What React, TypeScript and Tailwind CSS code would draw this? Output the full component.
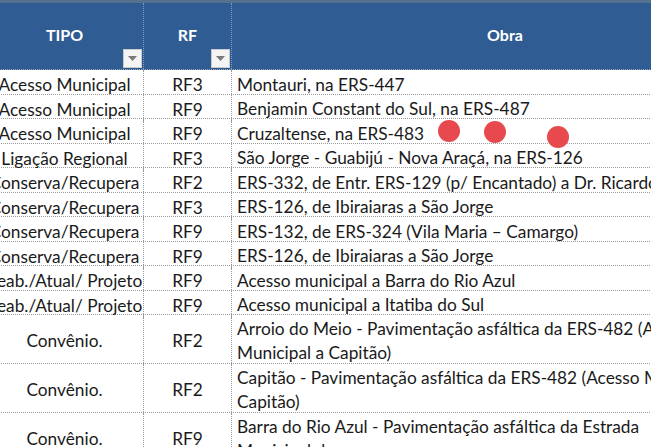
const rows: { tipo: string; rf: string; obra: string[] }[] = [
  { tipo: 'Acesso Municipal', rf: 'RF3', obra: ['Montauri, na ERS-447'] },
  { tipo: 'Acesso Municipal', rf: 'RF9', obra: ['Benjamin Constant do Sul, na ERS-487'] },
  { tipo: 'Acesso Municipal', rf: 'RF9', obra: ['Cruzaltense, na ERS-483'] },
  { tipo: 'Ligação Regional', rf: 'RF3', obra: ['São Jorge - Guabijú - Nova Araçá, na ERS-126'] },
  { tipo: 'Conserva/Recupera', rf: 'RF2', obra: ['ERS-332, de Entr. ERS-129 (p/ Encantado) a Dr. Ricardo'] },
  { tipo: 'Conserva/Recupera', rf: 'RF3', obra: ['ERS-126, de Ibiraiaras a São Jorge'] },
  { tipo: 'Conserva/Recupera', rf: 'RF9', obra: ['ERS-132, de ERS-324 (Vila Maria – Camargo)'] },
  { tipo: 'Conserva/Recupera', rf: 'RF9', obra: ['ERS-126, de Ibiraiaras a São Jorge'] },
  { tipo: 'Reab./Atual/ Projeto', rf: 'RF9', obra: ['Acesso municipal a Barra do Rio Azul'] },
  { tipo: 'Reab./Atual/ Projeto', rf: 'RF9', obra: ['Acesso municipal a Itatiba do Sul'] },
  {
    tipo: 'Convênio.',
    rf: 'RF2',
    obra: ['Arroio do Meio - Pavimentação asfáltica da ERS-482 (Acesso', 'Municipal a Capitão)'],
  },
  {
    tipo: 'Convênio.',
    rf: 'RF2',
    obra: ['Capitão - Pavimentação asfáltica da ERS-482 (Acesso Municipal a', 'Capitão)'],
  },
  {
    tipo: 'Convênio.',
    rf: 'RF9',
    obra: ['Barra do Rio Azul - Pavimentação asfáltica da Estrada', 'Municipal de acesso'],
  },
]

function FilterButton() {
  return (
    <div className="absolute right-[1px] bottom-[1px] w-[19px] h-[19px] bg-[#f4f4f4] border border-[#c9c9c9] flex items-center justify-center">
      <svg width="9" height="5" viewBox="0 0 9 5">
        <path d="M0 0h9L4.5 5z" fill="#7a7a7a" />
      </svg>
    </div>
  )
}

export default function App() {
  return (
    <div
      className="w-[651px] h-[447px] overflow-hidden bg-white relative"
      style={{ fontFamily: 'Lato, "Open Sans", sans-serif' }}
    >
      <div className="h-[3px] bg-[#56708f]" />
      <div className="ml-[-14px] w-[792px]">
        {/* Header */}
        <div className="grid grid-cols-[158px_88px_546px] h-[67px] bg-[#2f5c92] text-white font-bold text-[16px] border-b border-dotted border-[#9aa8b8]">
          <div className="relative flex items-center justify-center pb-[2px] border-r border-dotted border-[#7e9cc2]">
            TIPO
            <FilterButton />
          </div>
          <div className="relative flex items-center justify-center pb-[2px] border-r border-dotted border-[#7e9cc2]">
            RF
            <FilterButton />
          </div>
          <div className="flex items-center justify-center pb-[2px]">Obra</div>
        </div>

        {/* Rows */}
        {rows.map((r, i) => (
          <div
            key={i}
            className={`grid grid-cols-[158px_88px_546px] text-[17.3px] text-[#1a1a1a] border-b border-dotted border-[#9a9a9a] ${
              r.obra.length > 1 ? 'h-[49px]' : 'h-[24.5px]'
            }`}
          >
            <div className="flex items-center justify-center pt-[2px] whitespace-nowrap overflow-hidden border-r border-dotted border-[#9a9a9a]">
              {r.tipo}
            </div>
            <div className="flex items-center justify-center pt-[2px] border-r border-dotted border-[#9a9a9a]">{r.rf}</div>
            <div className="pl-[5px] pt-[2px] whitespace-nowrap flex flex-col justify-center">
              {r.obra.map((line, j) => (
                <div key={j} className="leading-[24px]">
                  {line}
                </div>
              ))}
            </div>
          </div>
        ))}
      </div>

      {/* red marks */}
      <div className="absolute left-[438px] top-[120px] w-[22px] h-[22px] rounded-full bg-[#e8494e]" />
      <div className="absolute left-[484px] top-[121px] w-[22px] h-[22px] rounded-full bg-[#e8494e]" />
      <div className="absolute left-[547px] top-[126px] w-[22px] h-[22px] rounded-full bg-[#e8494e]" />
    </div>
  )
}
